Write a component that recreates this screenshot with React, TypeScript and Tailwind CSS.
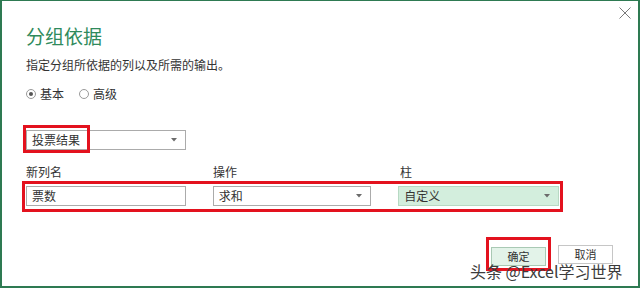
import React from "react";

const font = { fontFamily: '"Noto Sans CJK SC", "Noto Sans", sans-serif' };

function Arrow() {
  return (
    <svg width="6" height="4" viewBox="0 0 6 4" className="shrink-0">
      <path d="M0 0 L6 0 L3 3.5 Z" fill="#6b6b6b" />
    </svg>
  );
}

function Select({ value, width, green }: { value: string; width: string; green?: boolean }) {
  return (
    <div
      className={`${width} h-[20px] flex items-center justify-between pl-[5px] pr-[8px] border text-[12px] text-[#333] ${
        green ? "bg-[#d3eedd] border-[#b7d9c3]" : "bg-white border-[#ababab]"
      }`}
    >
      <span className="leading-none">{value}</span>
      <Arrow />
    </div>
  );
}

export default function App() {
  return (
    <div
      className="relative w-[640px] h-[288px] bg-white border-x-2 border-b-2 border-t border-[#2e7a52] text-[#333]"
      style={font}
    >
      {/* close */}
      <svg width="12" height="12" viewBox="0 0 12 12" className="absolute left-[617px] top-[6px]">
        <path d="M0.5 0.5 L11.5 11.5 M11.5 0.5 L0.5 11.5" stroke="#7a7a7a" strokeWidth="1" />
      </svg>

      <div className="pl-[24px]">
        <h1 className="mt-[25px] text-[19px] leading-[20px] text-[#2f8a5c] font-normal">分组依据</h1>
        <p className="mt-[12px] text-[12px] leading-[14px] text-[#333]">指定分组所依据的列以及所需的输出。</p>

        <div className="mt-[15px] flex items-center gap-[15px] text-[12px] leading-[14px]">
          <label className="flex items-center gap-[4px]">
            <span className="w-[10px] h-[10px] rounded-full border border-[#9a9a9a] flex items-center justify-center">
              <span className="w-[4px] h-[4px] rounded-full bg-[#555]" />
            </span>
            基本
          </label>
          <label className="flex items-center gap-[4px]">
            <span className="w-[10px] h-[10px] rounded-full border border-[#9a9a9a]" />
            高级
          </label>
        </div>

        <div className="mt-[29px]">
          <Select value="投票结果" width="w-[160px]" />
        </div>

        <div className="mt-[15px] flex text-[12px] leading-[14px]">
          <span className="w-[187px]">新列名</span>
          <span className="w-[187px]">操作</span>
          <span>柱</span>
        </div>

        <div className="mt-[2px] -ml-[4px] w-[541px] border-[3px] border-[#e3121e] px-[1px] pt-[2px] pb-[3px] flex gap-[27px]">
          <div className="w-[160px] h-[20px] border border-[#ababab] flex items-center pl-[5px] text-[12px] leading-none">
            票数
          </div>
          <Select value="求和" width="w-[159px]" />
          <Select value="自定义" width="w-[161px]" green />
        </div>
      </div>

      <div className="mt-[25px] pr-[25px] flex justify-end items-center gap-[7px]">
        <div className="border-[3px] border-[#e3121e] p-[2px]">
          <button className="w-[55px] h-[19px] bg-[#e3f3e9] border border-[#a9c9b4] text-[11px] leading-none text-[#333]">
            确定
          </button>
        </div>
        <button className="w-[55px] h-[19px] bg-white border border-[#c6c6c6] text-[11px] leading-none text-[#333]">
          取消
        </button>
      </div>

      {/* annotation around the group-by column */}
      <div className="absolute left-[21px] top-[124px] w-[67px] h-[28px] border-[3px] border-[#e3121e]" />

      {/* watermark */}
      <div className="absolute left-[468px] top-[260px] text-[16px] leading-[20px] text-[#3c3c3c] whitespace-nowrap">
        头条 @Excel学习世界
      </div>
    </div>
  );
}
